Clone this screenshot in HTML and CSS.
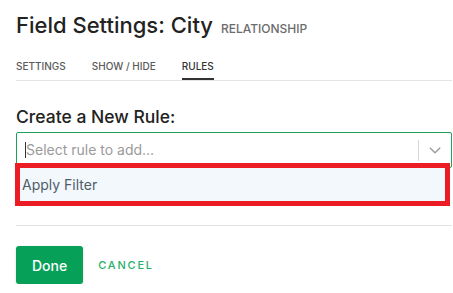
FILE: index.html
```html
<!DOCTYPE html>
<html>
<head>
<meta charset="utf-8">
<link rel="stylesheet" href="styles.css">
</head>
<body>
<div class="panel">
  <header class="head">
    <h1 class="title">Field Settings: City <span class="type">RELATIONSHIP</span></h1>
  </header>
  <nav class="tabs">
    <span class="tab">SETTINGS</span>
    <span class="tab">SHOW / HIDE</span>
    <span class="tab active">RULES</span>
  </nav>
  <section class="rule">
    <h2 class="rule-label">Create a New Rule:</h2>
    <div class="select">
      <div class="value">
        <span class="caret"></span>
        <span class="placeholder">Select rule to add...</span>
      </div>
      <span class="sep"></span>
      <span class="indicator">
        <svg width="12" height="7" viewBox="0 0 12 7"><path d="M0.8 0.8 L6 5.8 L11.2 0.8" fill="none" stroke="#9b9b9b" stroke-width="1.4"/></svg>
      </span>
      <div class="menu">
        <div class="option">Apply Filter</div>
      </div>
    </div>
  </section>
  <hr class="divider">
  <footer class="actions">
    <button class="done">Done</button>
    <span class="cancel">CANCEL</span>
  </footer>
</div>
</body>
</html>
```
FILE: styles.css
```css
html, body {
  margin: 0;
  padding: 0;
  background: #ffffff;
}
body {
  font-family: Inter, "Noto Sans", sans-serif;
  color: #222;
}
.panel {
  width: 436px;
  margin-left: 16px;
  padding-top: 12px;
}
.head { margin: 0; }
.title {
  margin: 0;
  font-size: 22px;
  line-height: 26px;
  font-weight: 500;
  color: #222;
}
.type {
  font-size: 12px;
  line-height: 1;
  font-weight: 500;
  color: #6b6b6b;
  margin-left: 2px;
}
.tabs {
  display: flex;
  gap: 26px;
  margin-top: 21px;
  border-bottom: 1px solid #e4e4e4;
}
.tab {
  font-size: 10px;
  line-height: 14px;
  font-weight: 500;
  color: #5a5a5a;
  padding-bottom: 5px;
  border-bottom: 2px solid transparent;
}
.tab.active {
  color: #333;
  border-bottom-color: #333;
}
.rule { margin-top: 26px; }
.rule-label {
  margin: 0 0 5px 0;
  font-size: 17.5px;
  line-height: 20px;
  font-weight: 500;
  color: #222;
}
.select {
  position: relative;
  display: flex;
  align-items: center;
  height: 34px;
  border: 1px solid #1fa05b;
  border-radius: 2px;
}
.value {
  flex: 1;
  display: flex;
  align-items: center;
  padding-left: 8px;
}
.caret {
  width: 1px;
  height: 16px;
  background: #333;
}
.placeholder {
  font-size: 14px;
  line-height: 20px;
  color: #9a9a9a;
}
.sep {
  width: 1px;
  height: 21px;
  background: #d8d8d8;
}
.indicator {
  width: 32px;
  display: flex;
  justify-content: center;
  align-items: center;
  padding-top: 1px;
}
.indicator svg { display: block; }
.menu {
  position: absolute;
  left: -2px;
  top: 30px;
  width: 425px;
  height: 33px;
  border: 5px solid #ec1c24;
  background: #f3f8fc;
}
.option {
  font-size: 14px;
  line-height: 20px;
  color: #4f5d6b;
  padding: 7px 0 0 2px;
}
.divider {
  margin: 57px 0 0 0;
  border: 0;
  border-top: 1px solid #e3e3e3;
  height: 0;
}
.actions {
  display: flex;
  align-items: center;
  margin-top: 20px;
}
.done {
  height: 38px;
  padding: 0 16px;
  border: 0;
  border-radius: 3px;
  background: #07a058;
  color: #fff;
  font-family: Inter, "Noto Sans", sans-serif;
  font-size: 14px;
  font-weight: 500;
  box-shadow: 0 1px 3px rgba(0,0,0,0.15);
}
.cancel {
  margin-left: 15px;
  font-size: 11px;
  font-weight: 500;
  letter-spacing: 1.8px;
  color: #2aaf69;
}
```
